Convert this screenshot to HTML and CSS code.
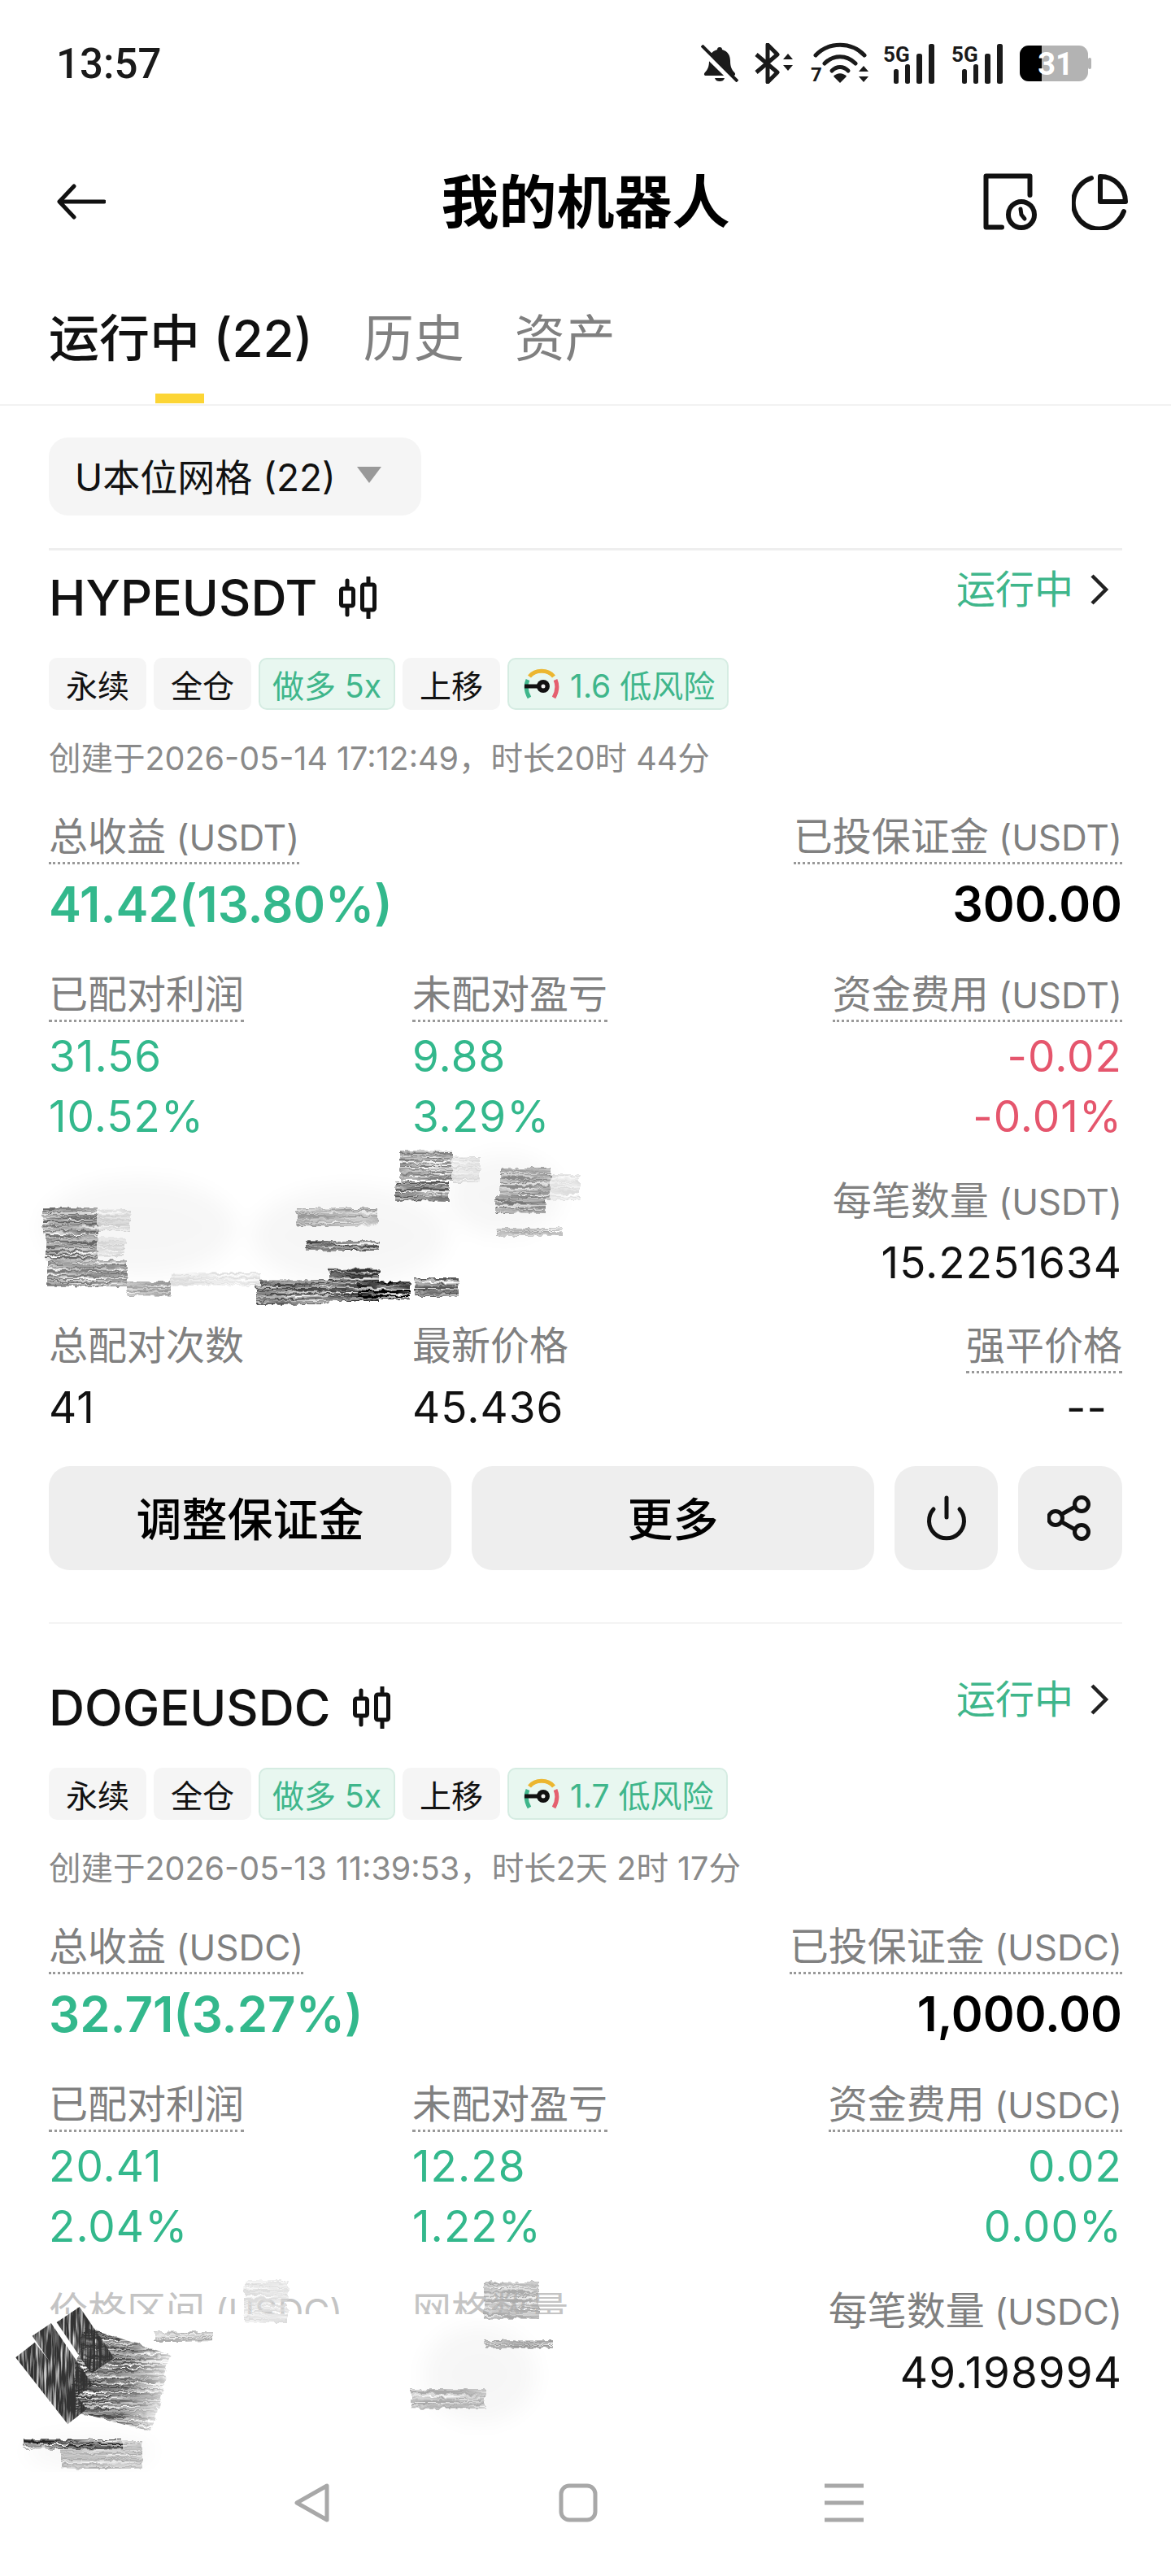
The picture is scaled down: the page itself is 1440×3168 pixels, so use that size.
FILE: index.html
```html
<!DOCTYPE html>
<html lang="zh-CN">
<head>
<meta charset="utf-8">
<title>我的机器人</title>
<link rel="stylesheet" href="styles.css">
</head>
<body>
<svg class="defs" width="0" height="0" aria-hidden="true">
  <defs>
    <filter id="streak" x="-20%" y="-30%" width="140%" height="160%">
      <feTurbulence type="fractalNoise" baseFrequency="0.012 0.45" numOctaves="3" seed="7" result="n"/>
      <feColorMatrix in="n" type="matrix" values="0 0 0 0 0  0 0 0 0 0  0 0 0 0 0  2.4 0 0 0 -0.55" result="mask"/>
      <feComposite in="SourceGraphic" in2="mask" operator="in" result="lined"/>
      <feTurbulence type="fractalNoise" baseFrequency="0.12" numOctaves="2" seed="3" result="j"/>
      <feDisplacementMap in="lined" in2="j" scale="7" result="d"/>
      <feGaussianBlur in="d" stdDeviation="0.5"/>
    </filter>
    <filter id="streakdiag" x="-20%" y="-20%" width="140%" height="140%">
      <feTurbulence type="fractalNoise" baseFrequency="0.4 0.03" numOctaves="2" seed="9" result="n"/>
      <feColorMatrix in="n" type="matrix" values="0 0 0 0 0  0 0 0 0 0  0 0 0 0 0  2.4 0 0 0 -0.35" result="mask"/>
      <feComposite in="SourceGraphic" in2="mask" operator="in"/>
    </filter>
    <filter id="soft" x="-60%" y="-60%" width="220%" height="220%">
      <feGaussianBlur stdDeviation="14"/>
    </filter>
    <linearGradient id="fade" x1="0" x2="1" y1="0" y2="0">
      <stop offset="0" stop-color="#333"/>
      <stop offset=".6" stop-color="#555"/>
      <stop offset="1" stop-color="#ccc"/>
    </linearGradient>
    <symbol id="candle" viewBox="0 0 50 52">
      <path d="M11 5v8M11 38v9M37 1v8M37 43v8" fill="none" stroke="#111" stroke-width="5" stroke-linecap="round"/>
      <rect x="3.5" y="15" width="15" height="21" rx="2" fill="none" stroke="#111" stroke-width="5"/>
      <rect x="29.5" y="10" width="15" height="31" rx="2" fill="none" stroke="#111" stroke-width="5"/>
    </symbol>
    <symbol id="gauge" viewBox="0 0 44 38">
      <path d="M7 36C3 29 2 21 5 14" fill="none" stroke="#3fb68b" stroke-width="5"/>
      <path d="M7 10C14 1 30 1 37 10" fill="none" stroke="#ecb62f" stroke-width="5"/>
      <path d="M39 14C42 21 41 29 37 36" fill="none" stroke="#e5606f" stroke-width="5"/>
      <circle cx="24" cy="22" r="8" fill="#111"/>
      <circle cx="24" cy="22" r="2.5" fill="#f2f2f2"/>
      <path d="M1 22h17" stroke="#111" stroke-width="5"/>
    </symbol>
    <symbol id="chev" viewBox="0 0 28 40">
      <path d="M5 3l17 17L5 37" fill="none" stroke="#222" stroke-width="4.5"/>
    </symbol>
    <symbol id="power" viewBox="0 0 50 56">
      <path d="M25 3v24" fill="none" stroke="#111" stroke-width="5" stroke-linecap="round"/>
      <path d="M9 17a21.5 21.5 0 1 0 32 0" fill="none" stroke="#111" stroke-width="5" stroke-linecap="round"/>
    </symbol>
    <symbol id="share" viewBox="0 0 56 56">
      <circle cx="42" cy="11" r="8.5" fill="none" stroke="#111" stroke-width="5"/>
      <circle cx="42" cy="45" r="8.5" fill="none" stroke="#111" stroke-width="5"/>
      <circle cx="10" cy="28" r="8.5" fill="none" stroke="#111" stroke-width="5"/>
      <path d="M18 23l16-9M18 33l16 9" fill="none" stroke="#111" stroke-width="5" stroke-linecap="round"/>
    </symbol>
    <symbol id="signal" viewBox="0 0 66 50">
      <rect x="13" y="32" width="6" height="18" rx="2.5" fill="#1a1a1a"/>
      <rect x="27" y="26" width="6" height="24" rx="2.5" fill="#1a1a1a"/>
      <rect x="41" y="13" width="7" height="37" rx="2.5" fill="#1a1a1a"/>
      <rect x="56" y="1" width="7" height="49" rx="2.5" fill="#1a1a1a"/>
      <text x="0" y="23" class="signal-text">5G</text>
    </symbol>
  </defs>
</svg>

<div class="phone">
  <header class="status">
    <span class="status-time">13:57</span>
    <div class="status-icons">
      <svg class="ic-bell" viewBox="0 0 46 46" aria-hidden="true">
        <path d="M23 3c2 0 3 1 3 3 7 2 10 7 10 14 0 7 2 11 5 14 2 2 1 4-1 4H6c-2 0-3-2-1-4 3-3 5-7 5-14 0-7 3-12 10-14 0-2 1-3 3-3z" fill="#1a1a1a"/>
        <path d="M17 41h12c-1 3-3 4-6 4s-5-1-6-4z" fill="#1a1a1a"/>
        <path d="M1 6l41 40" stroke="#fff" stroke-width="8"/>
        <path d="M1 1l44 44" stroke="#1a1a1a" stroke-width="4"/>
      </svg>
      <svg class="ic-bt" viewBox="0 0 48 50" aria-hidden="true">
        <path d="M2 14l26 22-12 12V2l12 12L2 36" fill="none" stroke="#1a1a1a" stroke-width="5" stroke-linejoin="round"/>
        <path d="M35 20l6-7 6 7zM35 27l6 7 6-7z" fill="#1a1a1a"/>
      </svg>
      <svg class="ic-wifi" viewBox="0 0 72 56" aria-hidden="true">
        <path d="M6 18C22 1 50 1 66 18" fill="none" stroke="#1a1a1a" stroke-width="5" stroke-linecap="round"/>
        <path d="M17 28c11-11 27-11 38 0" fill="none" stroke="#1a1a1a" stroke-width="5" stroke-linecap="round"/>
        <path d="M26 37c6-6 14-6 20 0" fill="none" stroke="#1a1a1a" stroke-width="5" stroke-linecap="round"/>
        <path d="M28 44c4-5 12-5 16 0l-8 8z" fill="#1a1a1a"/>
        <path d="M59 38l6-7 6 7zM59 44l6 7 6-7z" fill="#1a1a1a"/>
        <text x="0" y="50" class="wifi-text">7</text>
      </svg>
      <svg class="ic-signal" aria-hidden="true"><use href="#signal"/></svg>
      <svg class="ic-signal" aria-hidden="true"><use href="#signal"/></svg>
      <svg class="ic-batt" viewBox="0 0 88 46" aria-hidden="true">
        <rect x="0" y="1" width="84" height="44" rx="11" fill="#b3b3b3"/>
        <path d="M11 1h16v44H11A11 11 0 0 1 0 34V12A11 11 0 0 1 11 1z" fill="#000"/>
        <rect x="84" y="16" width="4" height="14" rx="2" fill="#b3b3b3"/>
        <text x="44" y="37" class="batt-text">31</text>
      </svg>
    </div>
  </header>

  <nav class="topbar">
    <svg class="ic-back" viewBox="0 0 60 44" aria-hidden="true">
      <path d="M58 22H4M21 3L3 22l18 19" fill="none" stroke="#111" stroke-width="5" stroke-linecap="round" stroke-linejoin="round"/>
    </svg>
    <h1 class="topbar-title">我的机器人</h1>
    <div class="topbar-actions">
      <svg class="ic-doc" viewBox="0 0 66 70" aria-hidden="true">
        <path d="M23 66.5H3.5V3.5h54V27" fill="none" stroke="#111" stroke-width="6" stroke-linecap="round" stroke-linejoin="round"/>
        <circle cx="47" cy="51" r="16" fill="none" stroke="#111" stroke-width="6"/>
        <path d="M46 44l1 7 4 5" fill="none" stroke="#111" stroke-width="5" stroke-linecap="round"/>
      </svg>
      <svg class="ic-pie" viewBox="0 0 70 70" aria-hidden="true">
        <path d="M24 6a32 32 0 1 0 40 41" fill="none" stroke="#111" stroke-width="6" stroke-linecap="round"/>
        <path d="M35 4a31 31 0 0 1 31 31H35z" fill="none" stroke="#111" stroke-width="6" stroke-linejoin="round"/>
      </svg>
    </div>
  </nav>

  <div class="tabs">
    <span class="tab tab--active">运行中 (22)</span>
    <span class="tab">历史</span>
    <span class="tab">资产</span>
  </div>

  <main class="content">
    <div class="filter">
      <span>U本位网格 (22)</span>
      <i class="filter-caret"></i>
    </div>

    <section class="card card--first">
      <div class="card-head">
        <div class="card-title">HYPEUSDT <svg class="ic-candle" aria-hidden="true"><use href="#candle"/></svg></div>
        <div class="card-status">运行中 <svg class="ic-chev" aria-hidden="true"><use href="#chev"/></svg></div>
      </div>
      <div class="tags">
        <span class="tag">永续</span>
        <span class="tag">全仓</span>
        <span class="tag tag--green">做多 5x</span>
        <span class="tag">上移</span>
        <span class="tag tag--green tag--risk"><svg class="ic-gauge" aria-hidden="true"><use href="#gauge"/></svg>1.6 低风险</span>
      </div>
      <p class="created">创建于2026-05-14 17:12:49，时长20时 44分</p>

      <div class="summary">
        <div>
          <span class="label label--dot">总收益<span class="unit"> (USDT)</span></span>
          <div class="big big--green">41.42(13.80%)</div>
        </div>
        <div class="right">
          <span class="label label--dot">已投保证金<span class="unit"> (USDT)</span></span>
          <div class="big">300.00</div>
        </div>
      </div>

      <div class="row row--pnl">
        <div>
          <span class="label label--dot">已配对利润</span>
          <div class="val val--green">31.56</div>
          <div class="val val--green">10.52%</div>
        </div>
        <div>
          <span class="label label--dot">未配对盈亏</span>
          <div class="val val--green">9.88</div>
          <div class="val val--green">3.29%</div>
        </div>
        <div class="right">
          <span class="label label--dot">资金费用<span class="unit"> (USDT)</span></span>
          <div class="val val--red">-0.02</div>
          <div class="val val--red">-0.01%</div>
        </div>
      </div>

      <div class="row row--grid">
        <div></div>
        <div></div>
        <div class="right">
          <span class="label">每笔数量<span class="unit"> (USDT)</span></span>
          <div class="val">15.2251634</div>
        </div>
        <svg class="scribble scribble--a" viewBox="0 0 720 220" aria-hidden="true">
          <g filter="url(#soft)" fill="#000" opacity=".03">
            <ellipse cx="170" cy="110" rx="120" ry="60"/>
            <ellipse cx="430" cy="120" rx="120" ry="60"/>
            <ellipse cx="620" cy="70" rx="70" ry="50"/>
          </g>
          <g filter="url(#streak)">
            <rect x="52" y="85" width="68" height="32" fill="#666"/>
            <rect x="120" y="88" width="40" height="26" fill="#ccc"/>
            <rect x="56" y="118" width="64" height="32" fill="#666"/>
            <rect x="120" y="122" width="34" height="24" fill="#d4d4d4"/>
            <rect x="58" y="150" width="98" height="32" fill="#777"/>
            <rect x="156" y="176" width="55" height="18" fill="#999"/>
            <rect x="492" y="15" width="64" height="36" fill="#777"/>
            <rect x="556" y="22" width="34" height="32" fill="#d8d8d8"/>
            <rect x="486" y="53" width="66" height="24" fill="#555"/>
            <rect x="615" y="36" width="62" height="40" fill="#888"/>
            <rect x="677" y="44" width="36" height="32" fill="#ddd"/>
            <rect x="609" y="72" width="62" height="20" fill="#777"/>
            <rect x="365" y="86" width="100" height="22" fill="#999"/>
            <rect x="376" y="126" width="90" height="12" fill="#444"/>
            <rect x="610" y="110" width="82" height="10" fill="#aaa"/>
            <rect x="510" y="172" width="54" height="22" fill="#555"/>
            <rect x="315" y="174" width="90" height="30" fill="#444"/>
            <rect x="404" y="160" width="62" height="40" fill="#333"/>
            <rect x="440" y="176" width="64" height="22" fill="#000"/>
            <rect x="210" y="165" width="110" height="16" fill="#ddd"/>
          </g>
        </svg>
      </div>

      <div class="row row--last">
        <div>
          <span class="label">总配对次数</span>
          <div class="val val--dark">41</div>
        </div>
        <div>
          <span class="label">最新价格</span>
          <div class="val val--dark">45.436</div>
        </div>
        <div class="right">
          <span class="label label--dot">强平价格</span>
          <div class="val val--dark val--dash">--</div>
        </div>
      </div>

      <div class="actions">
        <button class="btn btn--wide">调整保证金</button>
        <button class="btn btn--wide">更多</button>
        <button class="btn btn--icon"><svg class="ic-power" aria-hidden="true"><use href="#power"/></svg></button>
        <button class="btn btn--icon"><svg class="ic-share" aria-hidden="true"><use href="#share"/></svg></button>
      </div>
    </section>

    <section class="card card--next">
      <div class="card-head">
        <div class="card-title">DOGEUSDC <svg class="ic-candle" aria-hidden="true"><use href="#candle"/></svg></div>
        <div class="card-status">运行中 <svg class="ic-chev" aria-hidden="true"><use href="#chev"/></svg></div>
      </div>
      <div class="tags">
        <span class="tag">永续</span>
        <span class="tag">全仓</span>
        <span class="tag tag--green">做多 5x</span>
        <span class="tag">上移</span>
        <span class="tag tag--green tag--risk"><svg class="ic-gauge" aria-hidden="true"><use href="#gauge"/></svg>1.7 低风险</span>
      </div>
      <p class="created">创建于2026-05-13 11:39:53，时长2天 2时 17分</p>

      <div class="summary">
        <div>
          <span class="label label--dot">总收益<span class="unit"> (USDC)</span></span>
          <div class="big big--green">32.71(3.27%)</div>
        </div>
        <div class="right">
          <span class="label label--dot">已投保证金<span class="unit"> (USDC)</span></span>
          <div class="big">1,000.00</div>
        </div>
      </div>

      <div class="row row--pnl">
        <div>
          <span class="label label--dot">已配对利润</span>
          <div class="val val--green">20.41</div>
          <div class="val val--green">2.04%</div>
        </div>
        <div>
          <span class="label label--dot">未配对盈亏</span>
          <div class="val val--green">12.28</div>
          <div class="val val--green">1.22%</div>
        </div>
        <div class="right">
          <span class="label label--dot">资金费用<span class="unit"> (USDC)</span></span>
          <div class="val val--green">0.02</div>
          <div class="val val--green">0.00%</div>
        </div>
      </div>

      <div class="row row--grid">
        <div><span class="label label--faded">价格区间<span class="unit"> (USDC)</span></span></div>
        <div><span class="label label--faded">网格数量</span></div>
        <div class="right">
          <span class="label">每笔数量<span class="unit"> (USDC)</span></span>
          <div class="val">49.198994</div>
        </div>
        <svg class="scribble scribble--b" viewBox="0 0 720 270" aria-hidden="true">
          <rect x="0" y="76" width="700" height="194" fill="#fff"/>
          <g filter="url(#soft)" fill="#000" opacity=".03">
            <ellipse cx="110" cy="245" rx="80" ry="20"/>
            <ellipse cx="590" cy="150" rx="70" ry="60"/>
          </g>
          <g filter="url(#streak)">
            <rect x="300" y="34" width="54" height="52" fill="#ddd"/>
            <rect x="595" y="36" width="68" height="46" fill="#aaa"/>
            <rect x="597" y="108" width="83" height="10" fill="#999"/>
            <rect x="505" y="168" width="92" height="24" fill="#aaa"/>
            <rect x="190" y="98" width="72" height="12" fill="#aaa"/>
            <rect x="75" y="232" width="100" height="34" fill="#aaa"/>
            <rect x="30" y="230" width="120" height="12" fill="#222"/>
          </g>
          <g filter="url(#streak)">
            <rect x="-55" y="-17" width="110" height="34" transform="translate(152 125) rotate(18)" fill="url(#fade)"/>
            <rect x="-55" y="-20" width="110" height="40" transform="translate(146 160) rotate(12)" fill="url(#fade)"/>
            <rect x="-52" y="-18" width="104" height="36" transform="translate(140 190) rotate(14)" fill="url(#fade)"/>
          </g>
          <g fill="#333" filter="url(#streakdiag)">
            <rect x="-52" y="-15" width="104" height="30" transform="translate(63 161) rotate(52)"/>
            <rect x="-46" y="-14" width="92" height="28" transform="translate(77 133) rotate(56)"/>
            <rect x="-38" y="-17" width="76" height="34" transform="translate(105 108) rotate(56)"/>
          </g>
        </svg>
      </div>
    </section>
  </main>

  <footer class="sysnav">
    <svg class="ic-sys" viewBox="0 0 48 48" aria-hidden="true">
      <path d="M42 3v42L5 24z" fill="none" stroke="#a8a8a8" stroke-width="5" stroke-linejoin="round"/>
    </svg>
    <svg class="ic-sys" viewBox="0 0 48 48" aria-hidden="true">
      <rect x="3" y="3" width="42" height="42" rx="10" fill="none" stroke="#a8a8a8" stroke-width="5"/>
    </svg>
    <svg class="ic-sys" viewBox="0 0 48 48" aria-hidden="true">
      <path d="M0 3h48M0 24h48M0 45h48" fill="none" stroke="#a8a8a8" stroke-width="5"/>
    </svg>
  </footer>
</div>
</body>
</html>
```

FILE: styles.css
```css
* { box-sizing: border-box; }

html, body { margin: 0; padding: 0; background: #fff; }

body {
  width: 1440px;
  height: 3168px;
  overflow: hidden;
  font-family: Inter, "Noto Sans CJK SC", "Noto Sans", sans-serif;
  color: #111;
}

.defs { position: absolute; }

.phone {
  display: flex;
  flex-direction: column;
  height: 3168px;
}

/* status bar */
.status {
  flex: none;
  height: 156px;
  padding: 0 98px 0 69px;
  display: flex;
  align-items: center;
  justify-content: space-between;
}

.status-time {
  font-family: Roboto, sans-serif;
  font-size: 51px;
  font-weight: 500;
  color: #1a1a1a;
}

.status-icons { display: flex; align-items: center; }

.ic-bell { width: 46px; height: 46px; margin-right: 20px; }
.ic-bt { width: 48px; height: 50px; margin-right: 21px; }
.ic-wifi { width: 72px; height: 56px; margin-right: 17px; }
.ic-signal { width: 66px; height: 50px; margin-right: 18px; }
.ic-batt { width: 88px; height: 46px; }

.signal-text {
  font-family: Roboto, sans-serif;
  font-size: 26px;
  font-weight: 700;
  fill: #1a1a1a;
}
.wifi-text {
  font-family: Roboto, sans-serif;
  font-size: 24px;
  font-weight: 700;
  fill: #1a1a1a;
}
.batt-text {
  font-family: Roboto, sans-serif;
  font-size: 38px;
  font-weight: 700;
  fill: #fff;
  text-anchor: middle;
}

/* top bar */
.topbar {
  flex: none;
  height: 184px;
  padding: 0 52px;
  display: grid;
  grid-template-columns: 1fr auto 1fr;
  align-items: center;
}

.ic-back { width: 60px; height: 44px; margin-left: 18px; }

.topbar-title {
  margin: 0;
  font-size: 71px;
  font-weight: 700;
  line-height: 1;
  color: #000;
}

.topbar-actions {
  display: flex;
  justify-content: flex-end;
  align-items: center;
  gap: 43px;
}

.ic-doc { width: 66px; height: 70px; }
.ic-pie { width: 70px; height: 70px; }

/* tabs */
.tabs {
  flex: none;
  height: 159px;
  padding: 41px 60px 0;
  display: flex;
  gap: 62px;
  border-bottom: 2px solid #f2f2f2;
}

.tab {
  position: relative;
  font-size: 62px;
  line-height: 72px;
  height: 115px;
  color: #808080;
}

.tab--active { color: #111; font-weight: 500; }

.tab--active::after {
  content: "";
  position: absolute;
  left: 131px;
  top: 103px;
  width: 60px;
  height: 12px;
  background: #fcd535;
}

/* content */
.content {
  flex: 1;
  min-height: 0;
  overflow: hidden;
  padding: 39px 60px 0;
}

.filter {
  display: inline-flex;
  align-items: center;
  gap: 26px;
  width: 458px;
  height: 96px;
  padding: 0 0 4px 32px;
  border-radius: 24px;
  background: #f5f5f5;
  font-size: 46px;
  color: #111;
  vertical-align: top;
}

.filter-caret {
  width: 0;
  height: 0;
  border-left: 15px solid transparent;
  border-right: 15px solid transparent;
  border-top: 20px solid #999;
}

.card--first {
  margin-top: 40px;
  padding-top: 22px;
  border-top: 3px solid #eee;
}

.card--next {
  margin-top: 64px;
  padding-top: 67px;
  border-top: 2px solid #f4f4f4;
}

.card-head {
  display: flex;
  justify-content: space-between;
  align-items: flex-start;
  height: 72px;
}

.card-title {
  display: flex;
  align-items: center;
  gap: 26px;
  font-size: 61px;
  font-weight: 500;
  line-height: 72px;
  color: #111;
}

.ic-candle { width: 50px; height: 52px; }

.card-status {
  display: flex;
  align-items: center;
  gap: 18px;
  font-size: 48px;
  line-height: 52px;
  color: #3fb68b;
  padding-right: 14px;
}

.ic-chev { width: 28px; height: 40px; }

.tags {
  display: flex;
  gap: 9px;
  margin-top: 38px;
}

.tag {
  display: flex;
  align-items: center;
  height: 64px;
  padding: 0 21px;
  border-radius: 10px;
  background: #f5f5f5;
  font-size: 39px;
  color: #111;
  white-space: nowrap;
}

.tag--green {
  padding: 0 15px;
  background: #e8f7f0;
  border: 2px solid #d5ece2;
  color: #3fb68b;
}

.tag--risk { padding: 0 15px 0 18px; gap: 13px; }

.ic-gauge { width: 44px; height: 38px; }

.created {
  margin: 35px 0 0;
  font-size: 39.5px;
  line-height: 50px;
  color: #8a8a8a;
  white-space: nowrap;
}

.summary {
  display: flex;
  justify-content: space-between;
  margin-top: 43px;
}

.right { text-align: right; }

.label {
  display: inline-block;
  height: 62px;
  padding-bottom: 3px;
  border-bottom: 3px solid transparent;
  font-size: 48px;
  line-height: 56px;
  color: #808080;
  white-space: nowrap;
  vertical-align: top;
}

.unit { font-size: 44px; }

.label--dot { border-bottom: 3px dotted #999; }
.label--faded { color: #c4c4c4; }

.big {
  margin-top: 12px;
  font-size: 59px;
  font-weight: 600;
  line-height: 74px;
  color: #000;
}
.big--green { font-size: 60px; color: #33b88c; }

.row {
  display: grid;
  grid-template-columns: 447px 447px 1fr;
  position: relative;
}

.row--pnl { margin-top: 46px; }
.row--grid { margin-top: 39px; min-height: 141px; }
.row--last { margin-top: 37px; }

.val {
  font-size: 53px;
  letter-spacing: .02em;
  line-height: 74px;
  color: #111;
  white-space: nowrap;
}

.label + .val { margin-top: 5px; }

.val--green { color: #33b88c; }
.val--red { color: #e5566d; }
.val--dark { color: #111; }
.val--dash { padding-right: 18px; }

.scribble {
  position: absolute;
  left: -60px;
  width: 720px;
  pointer-events: none;
}
.scribble--a { top: -49px; height: 220px; }
.scribble--b { top: -44px; height: 270px; }

.actions {
  display: flex;
  gap: 25px;
  margin-top: 35px;
}

.btn {
  height: 128px;
  border: 0;
  border-radius: 26px;
  background: #eee;
  display: flex;
  align-items: center;
  justify-content: center;
  font-family: inherit;
  font-size: 56px;
  font-weight: 500;
  color: #000;
  padding: 0 0 5px;
}

.btn--wide { width: 495px; }
.btn--icon { width: 127px; padding: 0; }
.btn--icon + .btn--icon { width: 128px; }

.ic-power { width: 50px; height: 56px; }
.ic-share { width: 56px; height: 56px; }

/* system nav */
.sysnav {
  flex: none;
  height: 128px;
  background: #fff;
  padding: 14px 378px 0 360px;
  display: flex;
  justify-content: space-between;
  align-items: flex-start;
}

.ic-sys { width: 48px; height: 48px; }
```
